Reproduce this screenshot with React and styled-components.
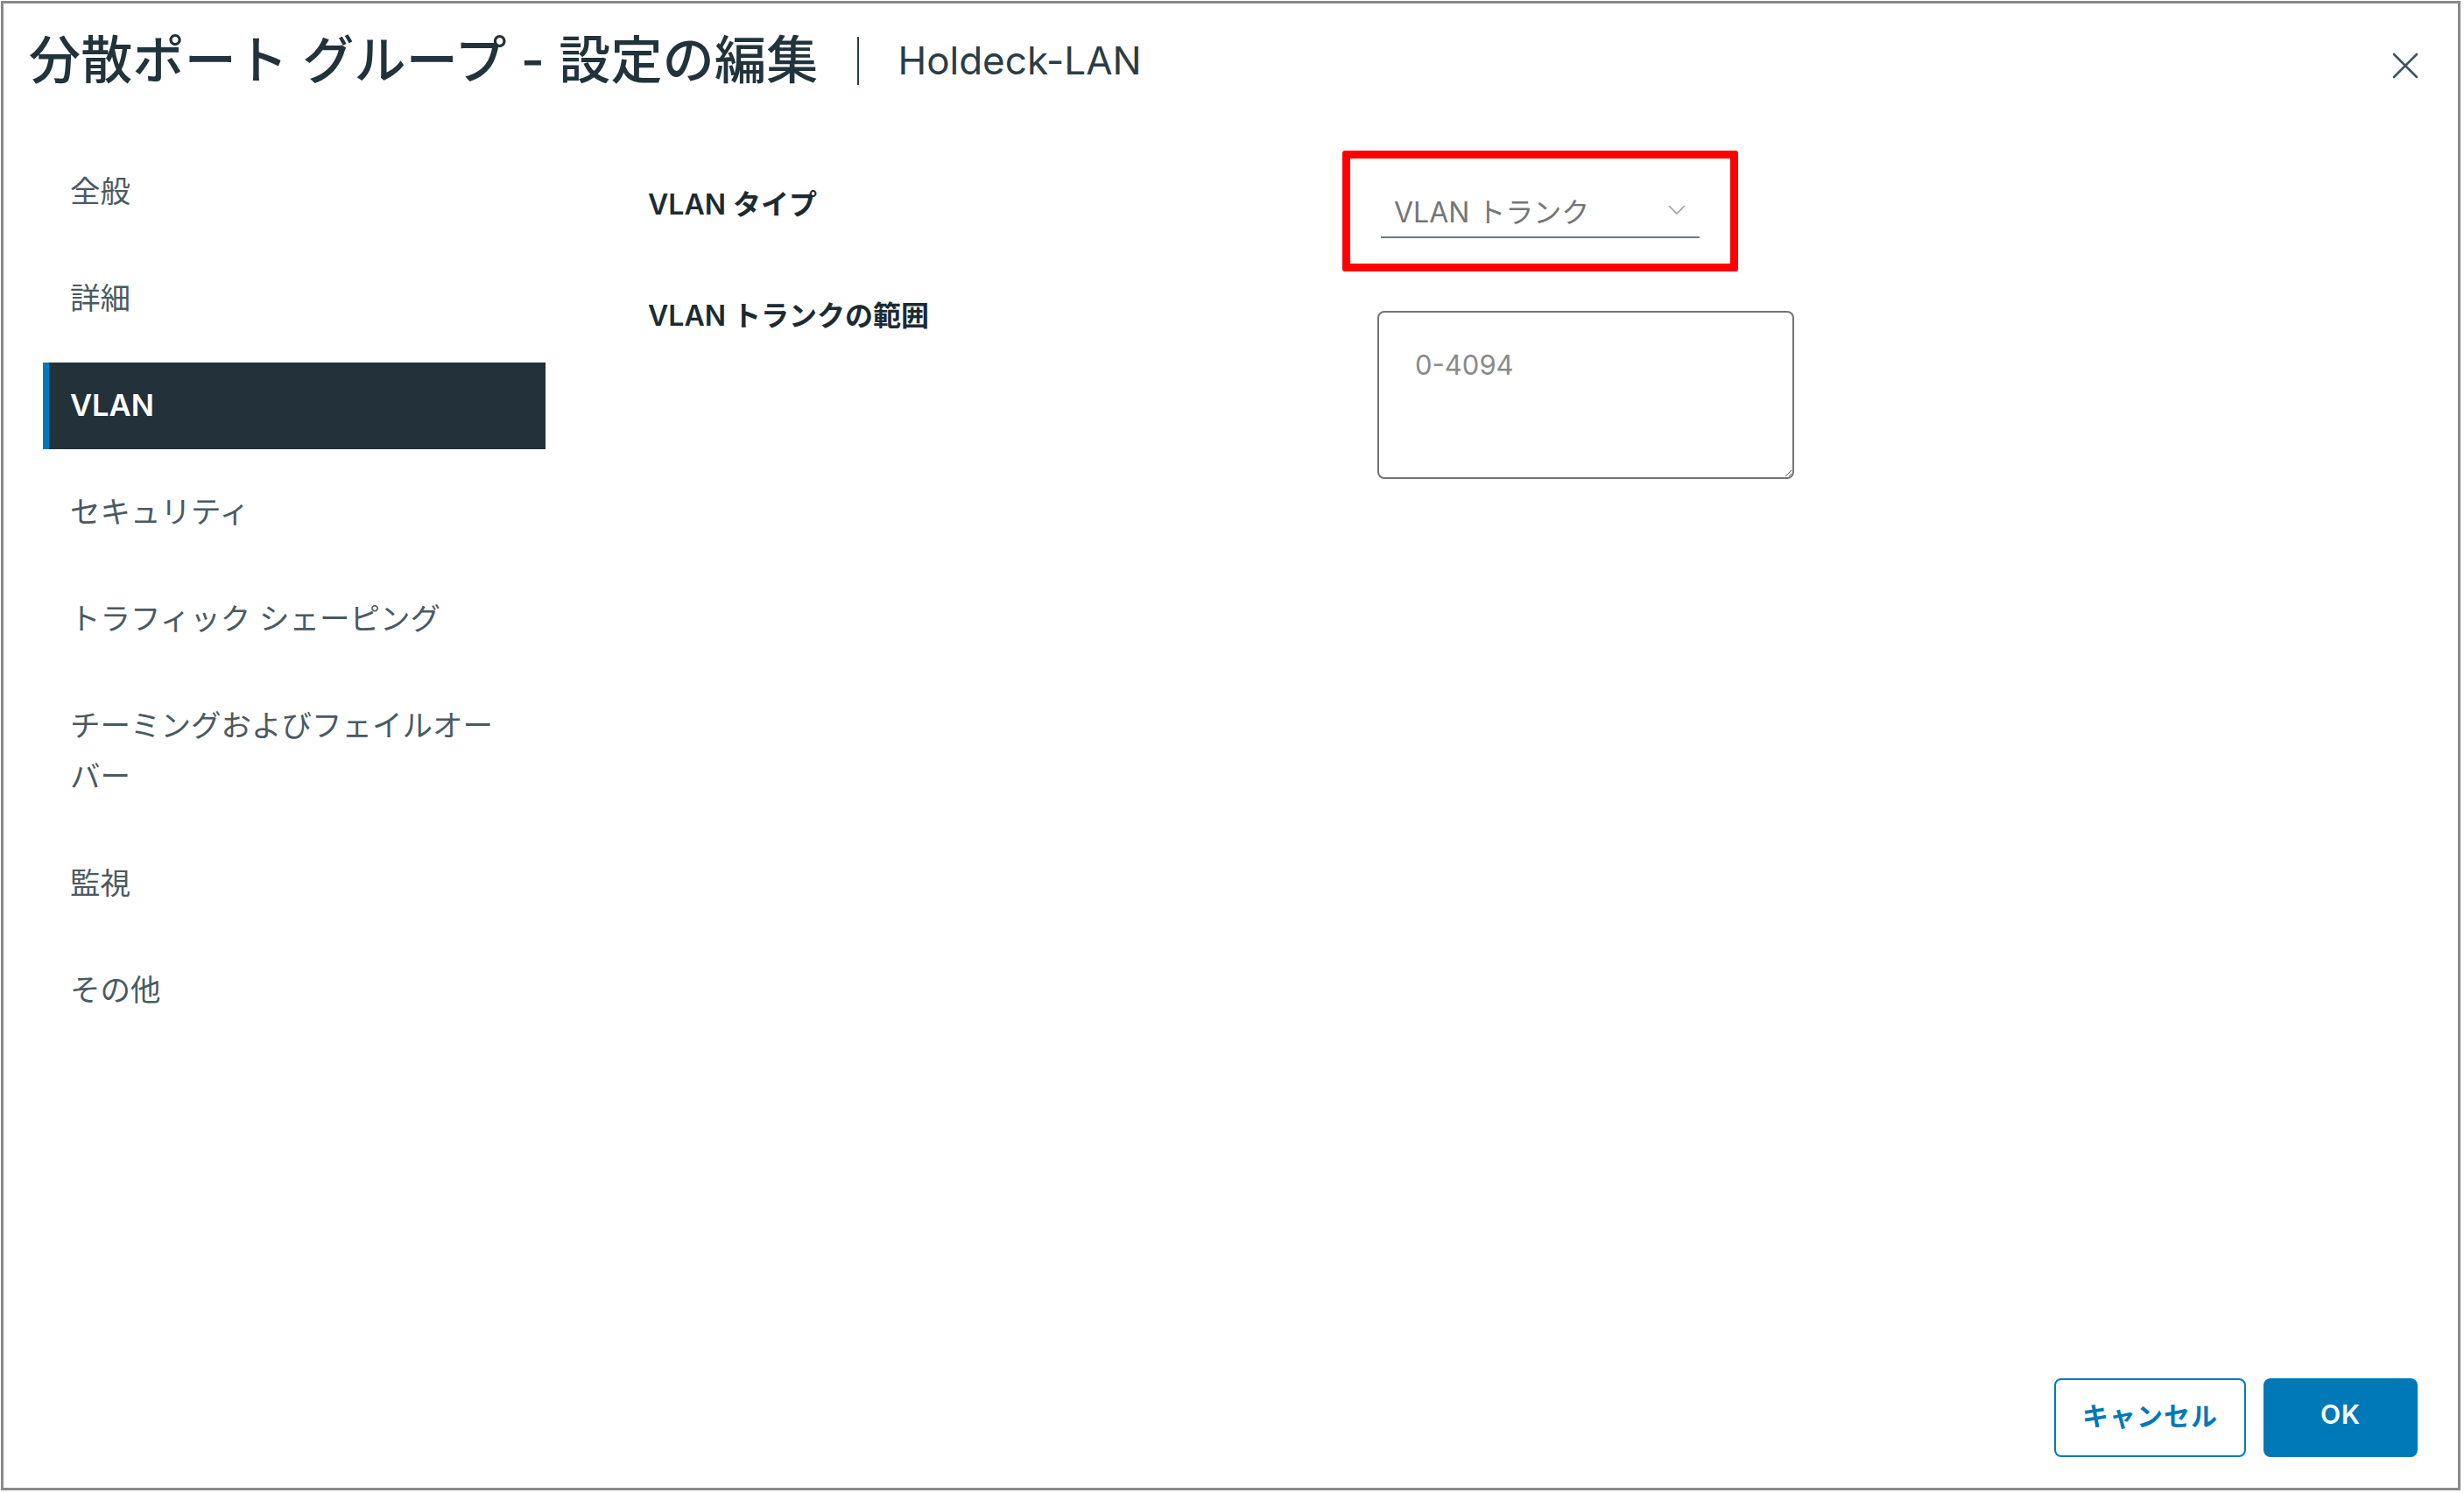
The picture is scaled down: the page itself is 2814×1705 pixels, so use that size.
import React from 'react';
import styled, { createGlobalStyle } from 'styled-components';

const GlobalStyle = createGlobalStyle`
  html, body {
    margin: 0;
    padding: 0;
    background: #fff;
  }
  body {
    font-family: Inter, "Noto Sans CJK JP", sans-serif;
    color: #22333b;
  }
  * {
    box-sizing: border-box;
  }
`;

const Frame = styled.div`
  display: flex;
  flex-direction: column;
  width: 2809px;
  height: 1701px;
  margin: 1px 0 0 1px;
  border: 3px solid #8a8a8a;
  background: #fff;
`;

const Header = styled.header`
  display: flex;
  align-items: center;
  height: 130px;
  padding: 0 45px 0 29px;
`;

const Title = styled.h1`
  margin: 0;
  font-size: 59px;
  font-weight: 500;
  line-height: 70px;
  letter-spacing: 0.25px;
  color: #21333b;
  white-space: nowrap;
`;

const Divider = styled.span`
  width: 2px;
  height: 55px;
  margin: 0 44px 0 45px;
  background: #2a3a42;
`;

const Subtitle = styled.span`
  font-size: 44px;
  font-weight: 400;
  color: #2b3d45;
`;

const CloseButton = styled.button`
  display: flex;
  align-items: center;
  justify-content: center;
  margin: 12px 0 0 auto;
  padding: 0;
  border: none;
  background: none;
  cursor: pointer;
`;

const Body = styled.div`
  flex: 1;
  display: flex;
  padding: 36px 0 0 45px;
`;

const Nav = styled.nav`
  display: flex;
  flex-direction: column;
  gap: 23px;
  width: 574px;
  flex-shrink: 0;
`;

const NavItem = styled.a`
  display: block;
  padding: 20px 40px 21px ${(p) => (p.$active ? '24px' : '31px')};
  border-left: ${(p) => (p.$active ? '7px solid #0079b8' : 'none')};
  background: ${(p) => (p.$active ? '#22313a' : 'transparent')};
  color: ${(p) => (p.$active ? '#fff' : '#4a5a62')};
  font-size: 34.5px;
  font-weight: ${(p) => (p.$active ? 600 : 400)};
  line-height: 58px;
  text-decoration: none;
  cursor: pointer;
`;

const Form = styled.div`
  display: grid;
  grid-template-columns: 833px 476px;
  grid-template-rows: 102px auto;
  row-gap: 69px;
  align-items: start;
  margin-left: 117px;
`;

const Label = styled.label`
  margin-top: ${(p) => p.$offset || 0}px;
  font-size: 32px;
  font-weight: 600;
  line-height: 40px;
  color: #1c2b33;
  white-space: nowrap;
`;

const SelectWrap = styled.div`
  position: relative;
  width: 364px;
  margin: 52px 0 0 4px;

  &::after {
    content: '';
    position: absolute;
    top: -50px;
    left: -44px;
    right: -44px;
    bottom: -38px;
    border: 9px solid #ff0000;
    border-radius: 3px;
    pointer-events: none;
  }
`;

const Select = styled.div`
  display: flex;
  align-items: center;
  justify-content: space-between;
  height: 50px;
  padding: 0 16px 12px 15px;
  border-bottom: 2px solid #6d7a82;
  font-size: 32px;
  color: #767676;
`;

const TextArea = styled.textarea`
  width: 476px;
  height: 192px;
  margin-top: 14px;
  padding: 40px 41px 30px;
  border: 2px solid #737373;
  border-radius: 8px;
  font-family: Inter, "Noto Sans CJK JP", sans-serif;
  font-size: 31px;
  line-height: 40px;
  color: #333;
  outline: none;

  &::placeholder {
    color: #8a8a8a;
  }
`;

const Footer = styled.footer`
  display: flex;
  justify-content: flex-end;
  gap: 20px;
  padding: 0 46px 35px 0;
`;

const Button = styled.button`
  height: 90px;
  min-width: ${(p) => (p.$primary ? '176px' : '218px')};
  padding: 0 30px 8px;
  border: 2px solid #0079b8;
  border-radius: 8px;
  background: ${(p) => (p.$primary ? '#0079b8' : '#fff')};
  color: ${(p) => (p.$primary ? '#fff' : '#0079b8')};
  font-family: Inter, "Noto Sans CJK JP", sans-serif;
  font-size: 30px;
  font-weight: 600;
  letter-spacing: 1px;
  cursor: pointer;
`;

const navItems = [
  '全般',
  '詳細',
  'VLAN',
  'セキュリティ',
  'トラフィック シェーピング',
  'チーミングおよびフェイルオーバー',
  '監視',
  'その他',
];

function App() {
  return (
    <>
      <GlobalStyle />
      <Frame>
        <Header>
          <Title>分散ポート グループ - 設定の編集</Title>
          <Divider />
          <Subtitle>Holdeck-LAN</Subtitle>
          <CloseButton aria-label="閉じる">
            <svg width="30" height="30" viewBox="0 0 30 30">
              <path d="M2 2 L28 28 M28 2 L2 28" stroke="#3e5561" strokeWidth="2.6" strokeLinecap="round" />
            </svg>
          </CloseButton>
        </Header>
        <Body>
          <Nav>
            {navItems.map((item) => (
              <NavItem key={item} $active={item === 'VLAN'}>
                {item}
              </NavItem>
            ))}
          </Nav>
          <Form>
            <Label $offset={44}>VLAN タイプ</Label>
            <SelectWrap>
              <Select>
                <span>VLAN トランク</span>
                <svg width="20" height="12" viewBox="0 0 20 12">
                  <path d="M1 1 L10 10 L19 1" fill="none" stroke="#a0a0a0" strokeWidth="1.6" />
                </svg>
              </Select>
            </SelectWrap>
            <Label>VLAN トランクの範囲</Label>
            <TextArea placeholder="0-4094" />
          </Form>
        </Body>
        <Footer>
          <Button>キャンセル</Button>
          <Button $primary>OK</Button>
        </Footer>
      </Frame>
    </>
  );
}

export default App;
